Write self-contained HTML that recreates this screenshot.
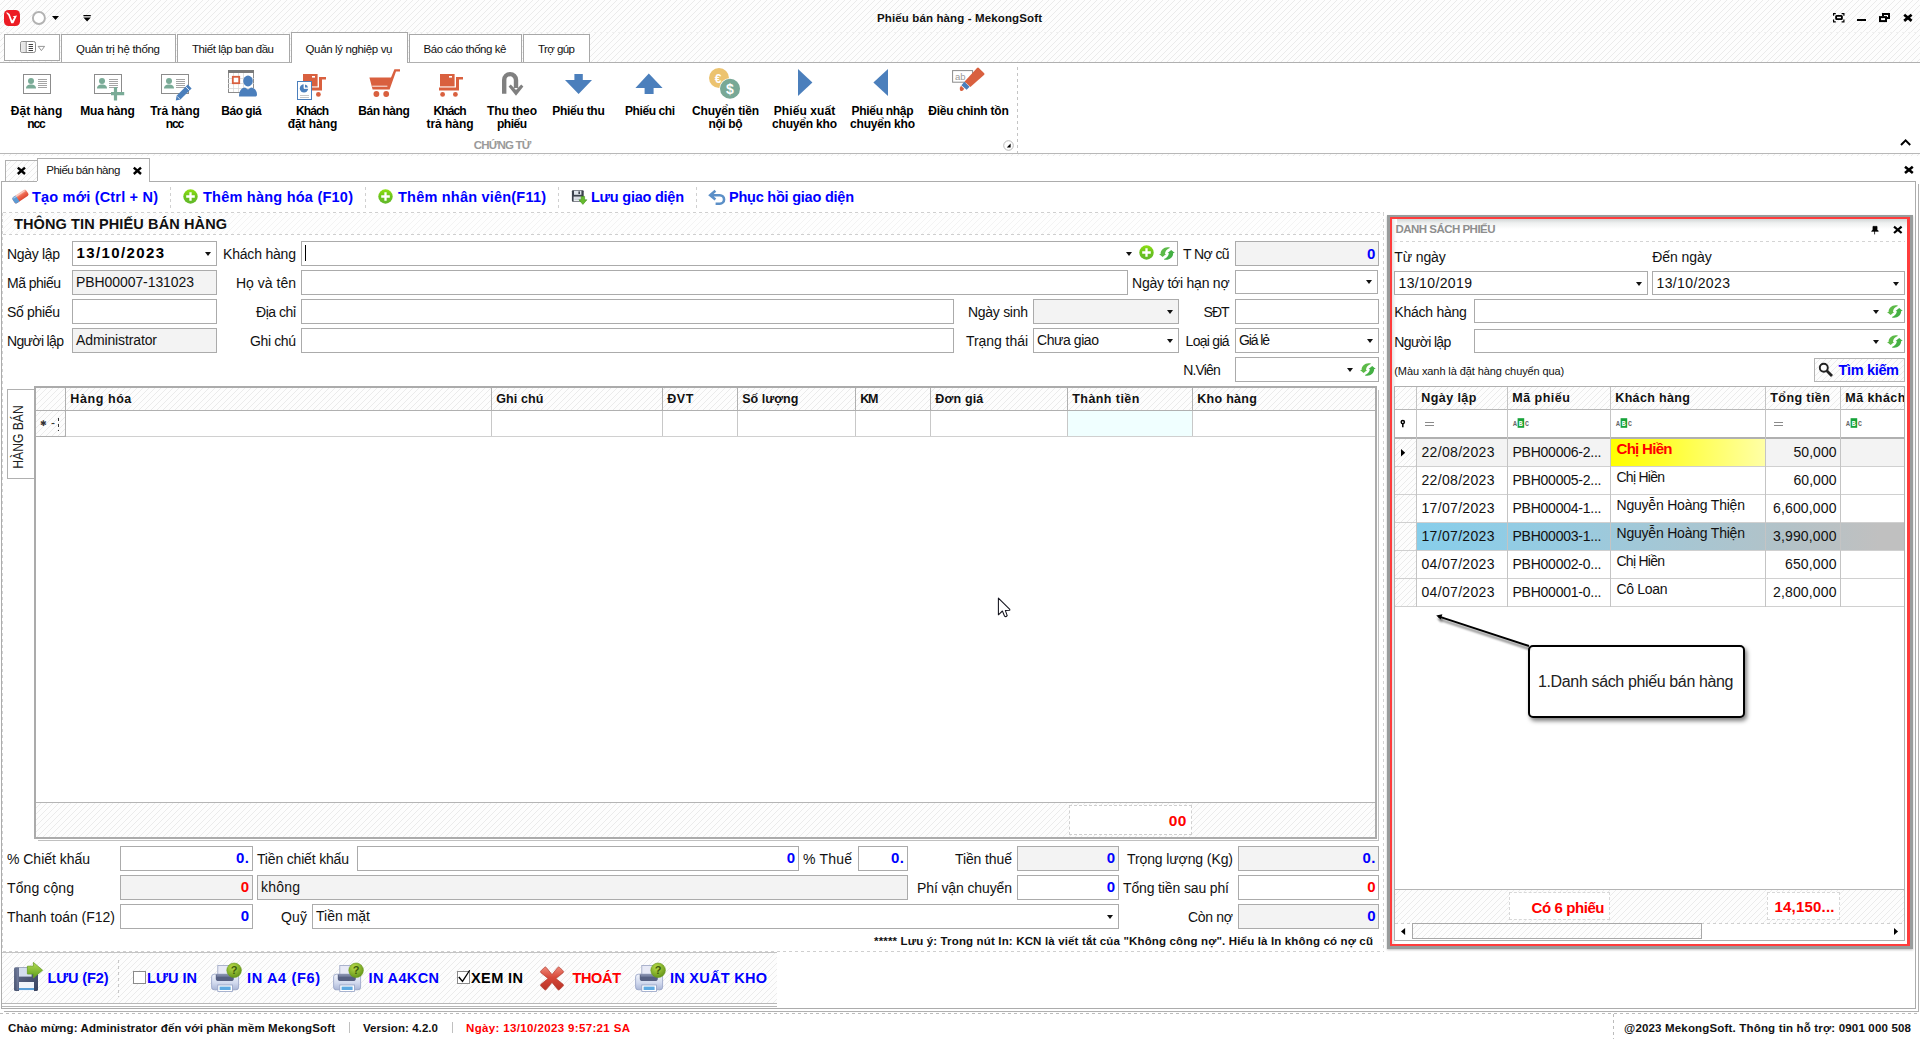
<!DOCTYPE html>
<html><head><meta charset="utf-8"><title>Phiếu bán hàng - MekongSoft</title><style>
html,body{margin:0;padding:0}
body{width:1920px;height:1039px;position:relative;overflow:hidden;background:#fff;font-family:"Liberation Sans",sans-serif;color:#000}
.a{position:absolute;box-sizing:border-box}
.t{white-space:nowrap}
.h{background:repeating-linear-gradient(135deg,#fdfdfd 0,#fdfdfd 3.5px,#ebebeb 3.5px,#ebebeb 4.2426px)}
.h2{background:repeating-linear-gradient(135deg,#fefefe 0,#fefefe 3.5px,#f3f3f3 3.5px,#f3f3f3 4.2426px)}
.in{border:1px solid #ababab;background:#fff}
.ro{border:1px solid #ababab;background:#f3f3f3}
.ar{width:0;height:0;border-left:3.5px solid transparent;border-right:3.5px solid transparent;border-top:4px solid #111}
svg{position:absolute;overflow:visible}
</style></head><body>
<div class="a h" style="left:0px;top:0px;width:1920px;height:63px;"></div>
<div class="a " style="left:0px;top:32px;width:1920px;height:1px;background:repeating-linear-gradient(90deg,#f0f0f0 0,#f0f0f0 3px,transparent 3px,transparent 6px);"></div>
<svg style="left:4px;top:10px" width="16" height="16" viewBox="0 0 16 16"><rect x="0" y="0" width="16" height="16" rx="4.5" fill="#ec1c24"/><path d="M2 2.4L3.4 2.4L5.6 4L8.2 10.6L10.2 7.2L8.6 6.2L13 5.6L9.4 13.2L7.2 13.2L4.4 5.4Z" fill="#fff"/></svg>
<svg style="left:32px;top:11px" width="14" height="14" viewBox="0 0 14 14"><circle cx="6.9" cy="7" r="6" fill="#fff" stroke="#b2b2b2" stroke-width="1.9"/></svg>
<svg style="left:52px;top:16px" width="8" height="4" viewBox="0 0 8 4"><path d="M0 0H7L3.5 4Z" fill="#000"/></svg>
<svg style="left:83px;top:14px" width="9" height="8" viewBox="0 0 9 8"><path d="M0.4 1H7.8V2.3H0.4Z M0.4 3.5H7.8L4.1 7.4Z" fill="#000"/></svg>
<span class="a t" style="left:877.00px;top:10.55px;font-size:11.5px;line-height:15.5px;color:#111;font-weight:bold;letter-spacing:0.129px;">Phiếu bán hàng - MekongSoft</span>
<svg style="left:1832.7px;top:12.8px" width="12" height="10" viewBox="0 0 12 10"><g fill="none" stroke="#000"><path d="M0.6 2.8V0.6H2.8 M8.6 0.6H10.9V2.8 M10.9 6.6V8.8H8.6 M2.8 8.8H0.6V6.6" stroke-width="1.2"/><rect x="3.1" y="2.9" width="5.8" height="3.2" rx="0.6" stroke-width="1.9"/></g></svg>
<div class="a " style="left:1857px;top:19px;width:9px;height:2px;background:#000;"></div>
<svg style="left:1879px;top:13px" width="12" height="10" viewBox="0 0 12 10"><g fill="none" stroke="#000" stroke-width="2"><path d="M4 3.2V1H10V4.9H8"/><rect x="1" y="4.1" width="6" height="4"/></g></svg>
<svg style="left:1902.6px;top:13.6px" width="10" height="8" viewBox="0 0 10 8"><path d="M1.2 0.7L8.6 6.9 M8.6 0.7L1.2 6.9" stroke="#000" stroke-width="2.7" fill="none"/></svg>
<div class="a " style="left:0px;top:62px;width:1920px;height:1px;background:#b0b0b0;"></div>
<div class="a " style="left:4px;top:34px;width:56px;height:27px;background:#fff;border:1px solid #a8a8a8;"></div>
<svg style="left:20px;top:41px" width="26" height="12" viewBox="0 0 26 12"><rect x="0.5" y="0.5" width="15" height="11" rx="1.8" fill="#fff" stroke="#8a8a8a" stroke-width="1"/><rect x="1.2" y="1.2" width="4.4" height="9.6" fill="#e6e6e6"/><path d="M6.2 0.5V11.5" stroke="#8a8a8a"/><path d="M8.6 3.5H13 M8.6 5.5H13 M8.6 7.5H13 M8.6 9.5H13" stroke="#444" stroke-width="1"/><path d="M18.2 5.4H24.6L21.4 9.6Z" fill="#fff" stroke="#8a8a8a" stroke-width="0.9"/></svg>
<div class="a " style="left:61px;top:34px;width:115px;height:29px;background:#fff;border:1px solid #a8a8a8;border-bottom:none;"></div>
<div class="a " style="left:61px;top:62px;width:115px;height:1px;background:#b0b0b0;"></div>
<span class="a t" style="left:76.00px;top:41.55px;font-size:11.5px;line-height:15.5px;color:#111;letter-spacing:-0.305px;">Quản trị hệ thống</span>
<div class="a " style="left:177px;top:34px;width:113px;height:29px;background:#fff;border:1px solid #a8a8a8;border-bottom:none;"></div>
<div class="a " style="left:177px;top:62px;width:113px;height:1px;background:#b0b0b0;"></div>
<span class="a t" style="left:192.00px;top:41.55px;font-size:11.5px;line-height:15.5px;color:#111;letter-spacing:-0.430px;">Thiết lập ban đầu</span>
<div class="a " style="left:409px;top:34px;width:113px;height:29px;background:#fff;border:1px solid #a8a8a8;border-bottom:none;"></div>
<div class="a " style="left:409px;top:62px;width:113px;height:1px;background:#b0b0b0;"></div>
<span class="a t" style="left:423.50px;top:41.55px;font-size:11.5px;line-height:15.5px;color:#111;letter-spacing:-0.435px;">Báo cáo thống kê</span>
<div class="a " style="left:523px;top:34px;width:67px;height:29px;background:#fff;border:1px solid #a8a8a8;border-bottom:none;"></div>
<div class="a " style="left:523px;top:62px;width:67px;height:1px;background:#b0b0b0;"></div>
<span class="a t" style="left:538.00px;top:41.55px;font-size:11.5px;line-height:15.5px;color:#111;letter-spacing:-0.559px;">Trợ gúp</span>
<div class="a " style="left:291px;top:32px;width:117px;height:31px;background:#fff;border:1px solid #a8a8a8;border-bottom:none;"></div>
<span class="a t" style="left:305.50px;top:41.55px;font-size:11.5px;line-height:15.5px;color:#111;letter-spacing:-0.357px;">Quản lý nghiệp vụ</span>
<div class="a " style="left:0px;top:63px;width:1920px;height:90px;background:#fff;"></div>
<div class="a " style="left:292px;top:62px;width:115px;height:1px;background:#fff;"></div>
<div class="a " style="left:0px;top:153px;width:1920px;height:1px;background:#b8b8b8;"></div>
<div class="a h" style="left:0px;top:154px;width:1920px;height:2px;"></div>
<div class="a " style="left:1017px;top:67px;width:1px;height:86px;background:repeating-linear-gradient(180deg,#c4c4c4 0,#c4c4c4 3px,transparent 3px,transparent 6px);"></div>
<svg style="left:23px;top:74px" width="28" height="20" viewBox="0 0 28 20"><rect x="0.5" y="0.5" width="27" height="19" fill="#fff" stroke="#8c8c8c"/><circle cx="8" cy="7" r="3" fill="#7aab97"/><path d="M3 14.6C3 11.4 5 10.4 8 10.4C11 10.4 13 11.4 13 14.6Z" fill="#7aab97"/><path d="M15 5.5H24 M15 7.5H24 M15 9.5H24 M15 11.5H24 M15 13.5H24" stroke="#9a9a9a" stroke-width="0.9"/></svg>
<svg style="left:94px;top:74px" width="32" height="28" viewBox="0 0 32 28"><rect x="0.5" y="0.5" width="27" height="19" fill="#fff" stroke="#8c8c8c"/><circle cx="8" cy="7" r="3" fill="#7aab97"/><path d="M3 14.6C3 11.4 5 10.4 8 10.4C11 10.4 13 11.4 13 14.6Z" fill="#7aab97"/><path d="M15 5.5H24 M15 7.5H24 M15 9.5H24 M15 11.5H24 M15 13.5H24" stroke="#9a9a9a" stroke-width="0.9"/><path d="M21.5 13V26.4 M17 19.6H30.2" stroke="#7aab97" stroke-width="3.2"/></svg>
<svg style="left:161px;top:74px" width="32" height="28" viewBox="0 0 32 28"><rect x="0.5" y="0.5" width="27" height="19" fill="#fff" stroke="#8c8c8c"/><circle cx="8" cy="7" r="3" fill="#7aab97"/><path d="M3 14.6C3 11.4 5 10.4 8 10.4C11 10.4 13 11.4 13 14.6Z" fill="#7aab97"/><path d="M15 5.5H24 M15 7.5H24 M15 9.5H24 M15 11.5H24 M15 13.5H24" stroke="#9a9a9a" stroke-width="0.9"/><path d="M26.8 10.6L30.6 14.4L19.4 25.6L14.8 26.6L15.6 21.8Z" fill="#4b7fbc"/><path d="M24.8 12.8L28.6 16.6" stroke="#fff" stroke-width="0.8"/><path d="M16.2 22.4L18.8 25" stroke="#fff" stroke-width="0.7"/></svg>
<svg style="left:228px;top:70px" width="30" height="28" viewBox="0 0 30 28"><rect x="0.5" y="1.5" width="25" height="21" fill="#fff" stroke="#8c8c8c"/><rect x="0" y="0" width="26" height="3" fill="#7a7a7a"/><path d="M5.5 3V22 M10.5 3V22 M15.5 3V22 M0 8.5H26 M0 13.5H26 M0 18.5H26" stroke="#d8d8d8" stroke-width="0.8"/><rect x="4.8" y="6.8" width="6.4" height="6.4" fill="#fff" stroke="#d9603f" stroke-width="1.8"/><ellipse cx="20" cy="11" rx="4.8" ry="5.4" fill="#4b7fbc"/><path d="M11 26.6C11 20 14 17.6 17 17.4L20 19.6L23 17.4C26 17.6 29 20 29 24.6C29 26 28.4 26.6 27 26.6Z" fill="#4b7fbc"/></svg>
<svg style="left:302px;top:74px" width="26" height="24" viewBox="0 0 26 24"><rect x="1" y="0" width="14.6" height="12.4" fill="#d9603f"/><rect x="10" y="2" width="3" height="1.6" fill="#fff"/><path d="M15.6 3H24V5.6H20V16.4H0V13.4H17V3Z" fill="#d9603f"/><circle cx="3.6" cy="20.4" r="2.4" fill="#d9603f"/><circle cx="16.4" cy="20.4" r="2.4" fill="#d9603f"/></svg>
<svg style="left:297px;top:81px" width="15" height="19" viewBox="0 0 15 19"><rect x="0.5" y="0.5" width="14" height="18" fill="#fff" stroke="#4b7fbc"/><circle cx="7" cy="7.4" r="4.2" fill="#4b7fbc"/><path d="M7 7.4V2.6A4.8 4.8 0 0 1 11.8 7.4Z" fill="#fff" stroke="#fff" stroke-width="0.8"/><path d="M8 6.4V3.4A3.4 3.4 0 0 1 11 6.4Z" fill="#4b7fbc"/><path d="M3 14.5H12 M3 16.5H12" stroke="#b8b8b8" stroke-width="0.8"/></svg>
<svg style="left:369px;top:68px" width="32" height="30" viewBox="0 0 32 30"><path d="M0.4 9.4H22L25.4 1.2H31V3.4H27L20.6 21.6H3.6Z" fill="#d9603f"/><path d="M3.2 18.2H18.4" stroke="#fff" stroke-width="0.9"/><circle cx="7.4" cy="26" r="2.9" fill="#d9603f"/><circle cx="17.2" cy="26" r="2.9" fill="#d9603f"/></svg>
<svg style="left:439px;top:74px" width="26" height="24" viewBox="0 0 26 24"><rect x="1" y="0" width="14.6" height="12.4" fill="#d9603f"/><rect x="10" y="2" width="3" height="1.6" fill="#fff"/><path d="M15.6 3H24V5.6H20V16.4H0V13.4H17V3Z" fill="#d9603f"/><circle cx="3.6" cy="20.4" r="2.4" fill="#d9603f"/><circle cx="16.4" cy="20.4" r="2.4" fill="#d9603f"/></svg>
<svg style="left:501px;top:71px" width="24" height="26" viewBox="0 0 24 26"><path d="M3.2 22.8V9A5.9 5.9 0 0 1 15 9V17" fill="none" stroke="#808080" stroke-width="4.4"/><path d="M7.6 15.6L9.8 13.6L15 19L20.2 13.6L22.4 15.6L15 24.8Z" fill="#808080"/></svg>
<svg style="left:565px;top:74px" width="28" height="21" viewBox="0 0 28 21"><path d="M9.4 0H17.8V6H27L13.6 20L0 6H9.4Z" fill="#4b7fbc"/></svg>
<svg style="left:635px;top:73px" width="28" height="22" viewBox="0 0 28 22"><path d="M13.8 0.4L27.6 15H18.6V21H9.6V15H0.4Z" fill="#4b7fbc"/></svg>
<svg style="left:708px;top:67px" width="34" height="34" viewBox="0 0 34 34"><circle cx="11" cy="11" r="10" fill="#ecc36f"/><text x="10" y="15.6" font-size="12" font-weight="bold" fill="#fff" text-anchor="middle" font-family="Liberation Sans">€</text><circle cx="22" cy="21.8" r="10.6" fill="#fff"/><circle cx="22" cy="21.8" r="10" fill="#78a896"/><text x="22" y="26.8" font-size="14" font-weight="bold" fill="#fff" text-anchor="middle" font-family="Liberation Sans">$</text></svg>
<svg style="left:798px;top:69px" width="15" height="27" viewBox="0 0 15 27"><path d="M0 0L14.4 13.4L0 27Z" fill="#4b7fbc"/></svg>
<svg style="left:873px;top:69px" width="15" height="27" viewBox="0 0 15 27"><path d="M15 0L0.4 13.4L15 27Z" fill="#4b7fbc"/></svg>
<svg style="left:952px;top:67px" width="34" height="26" viewBox="0 0 34 26"><rect x="0.6" y="3.6" width="20" height="11.6" fill="#fff" stroke="#8a8a8a" stroke-width="1"/><text x="3" y="13" font-size="9.5" fill="#9a9a9a" font-family="Liberation Sans">ab</text><path d="M26.6 0.8L32.2 6.2Q32.8 7 32.2 7.8L18.4 20L12.6 14.4L25 1Q25.8 0.2 26.6 0.8Z" fill="#d9603f"/><path d="M12.4 14.8L17.6 19.8L14.6 22.8L9.4 18.2Z" fill="#4b7fbc"/><path d="M9 18.8L12.2 21.8L11 23.6Q9.4 24.4 8.2 23.4Q7.4 22 8 20.6Z" fill="#d9603f"/></svg>
<span class="a t" style="left:10.75px;top:103.40px;font-size:12px;line-height:16px;color:#000;font-weight:bold;letter-spacing:0.024px;">Đặt hàng</span>
<span class="a t" style="left:27.25px;top:116.40px;font-size:12px;line-height:16px;color:#000;font-weight:bold;letter-spacing:-1.089px;">ncc</span>
<span class="a t" style="left:80.25px;top:103.40px;font-size:12px;line-height:16px;color:#000;font-weight:bold;letter-spacing:-0.214px;">Mua hàng</span>
<span class="a t" style="left:150.25px;top:103.40px;font-size:12px;line-height:16px;color:#000;font-weight:bold;letter-spacing:-0.073px;">Trả hàng</span>
<span class="a t" style="left:165.75px;top:116.40px;font-size:12px;line-height:16px;color:#000;font-weight:bold;letter-spacing:-1.089px;">ncc</span>
<span class="a t" style="left:221.25px;top:103.40px;font-size:12px;line-height:16px;color:#000;font-weight:bold;letter-spacing:-0.474px;">Báo giá</span>
<span class="a t" style="left:296.00px;top:103.40px;font-size:12px;line-height:16px;color:#000;font-weight:bold;letter-spacing:-0.918px;">Khách</span>
<span class="a t" style="left:287.75px;top:116.40px;font-size:12px;line-height:16px;color:#000;font-weight:bold;letter-spacing:-0.071px;">đặt hàng</span>
<span class="a t" style="left:358.25px;top:103.40px;font-size:12px;line-height:16px;color:#000;font-weight:bold;letter-spacing:-0.453px;">Bán hàng</span>
<span class="a t" style="left:433.50px;top:103.40px;font-size:12px;line-height:16px;color:#000;font-weight:bold;letter-spacing:-0.918px;">Khách</span>
<span class="a t" style="left:426.50px;top:116.40px;font-size:12px;line-height:16px;color:#000;font-weight:bold;letter-spacing:-0.048px;">trả hàng</span>
<span class="a t" style="left:487.00px;top:103.40px;font-size:12px;line-height:16px;color:#000;font-weight:bold;letter-spacing:-0.093px;">Thu theo</span>
<span class="a t" style="left:497.00px;top:116.40px;font-size:12px;line-height:16px;color:#000;font-weight:bold;letter-spacing:-0.500px;">phiếu</span>
<span class="a t" style="left:552.25px;top:103.40px;font-size:12px;line-height:16px;color:#000;font-weight:bold;letter-spacing:-0.270px;">Phiếu thu</span>
<span class="a t" style="left:625.00px;top:103.40px;font-size:12px;line-height:16px;color:#000;font-weight:bold;letter-spacing:-0.418px;">Phiếu chi</span>
<span class="a t" style="left:692.00px;top:103.40px;font-size:12px;line-height:16px;color:#000;font-weight:bold;letter-spacing:-0.167px;">Chuyển tiền</span>
<span class="a t" style="left:708.50px;top:116.40px;font-size:12px;line-height:16px;color:#000;font-weight:bold;letter-spacing:-0.398px;">nội bộ</span>
<span class="a t" style="left:773.75px;top:103.40px;font-size:12px;line-height:16px;color:#000;font-weight:bold;letter-spacing:0.091px;">Phiếu xuất</span>
<span class="a t" style="left:772.00px;top:116.40px;font-size:12px;line-height:16px;color:#000;font-weight:bold;letter-spacing:-0.187px;">chuyển kho</span>
<span class="a t" style="left:851.50px;top:103.40px;font-size:12px;line-height:16px;color:#000;font-weight:bold;letter-spacing:-0.297px;">Phiếu nhập</span>
<span class="a t" style="left:850.00px;top:116.40px;font-size:12px;line-height:16px;color:#000;font-weight:bold;letter-spacing:-0.187px;">chuyển kho</span>
<span class="a t" style="left:928.25px;top:103.40px;font-size:12px;line-height:16px;color:#000;font-weight:bold;letter-spacing:-0.217px;">Điều chỉnh tồn</span>
<span class="a t" style="left:473.75px;top:138.25px;font-size:11.5px;line-height:15.5px;color:#9a9a9a;font-weight:bold;letter-spacing:-0.809px;">CHỨNG TỪ</span>
<svg style="left:1003px;top:140px" width="11" height="11" viewBox="0 0 11 11"><circle cx="5.5" cy="5.5" r="4.8" fill="#fff" stroke="#b0b0b0" stroke-width="0.9"/><path d="M7.6 3.6V7.4H3.8Z" fill="#000"/></svg>
<svg style="left:1900px;top:139px" width="12" height="7" viewBox="0 0 12 7"><path d="M1 6L5.6 1.4L10.2 6" fill="none" stroke="#000" stroke-width="2"/></svg>
<div class="a h" style="left:5px;top:160px;width:33px;height:22px;border:1px solid #b0b0b0;border-bottom:none;"></div>
<svg style="left:17.4px;top:166.8px" width="9" height="8" viewBox="0 0 9 8"><path d="M0.8 0.6L8 7 M8 0.6L0.8 7" stroke="#000" stroke-width="2.4" fill="none"/></svg>
<div class="a " style="left:37px;top:158px;width:113px;height:24px;background:#fff;border:1px solid #b0b0b0;border-bottom:none;"></div>
<span class="a t" style="left:46.30px;top:163.05px;font-size:11.5px;line-height:15.5px;color:#111;letter-spacing:-0.506px;">Phiếu bán hàng</span>
<svg style="left:133px;top:166.8px" width="9" height="8" viewBox="0 0 9 8"><path d="M0.8 0.6L8 7 M8 0.6L0.8 7" stroke="#000" stroke-width="2.4" fill="none"/></svg>
<svg style="left:1904.4px;top:166px" width="10" height="8" viewBox="0 0 10 8"><path d="M1 0.7L8.8 6.9 M8.8 0.7L1 6.9" stroke="#000" stroke-width="2.6" fill="none"/></svg>
<div class="a " style="left:1px;top:181px;width:1915px;height:828px;border:1px solid #acacac;"></div>
<div class="a " style="left:37px;top:181px;width:112px;height:1px;background:#fff;"></div>
<div class="a " style="left:2px;top:1006px;width:775px;height:1px;background:#b8b8b8;"></div>
<div class="a " style="left:1918px;top:184px;width:1px;height:828px;background:#b0b0b0;"></div>
<div class="a " style="left:4px;top:1011px;width:1915px;height:1px;background:#b0b0b0;"></div>
<span class="a t" style="left:32.00px;top:187.55px;font-size:14.5px;line-height:18.5px;color:#0000ff;font-weight:bold;letter-spacing:0.195px;">Tạo mới (Ctrl + N)</span>
<span class="a t" style="left:203.00px;top:187.55px;font-size:14.5px;line-height:18.5px;color:#0000ff;font-weight:bold;letter-spacing:0.232px;">Thêm hàng hóa (F10)</span>
<span class="a t" style="left:398.00px;top:187.55px;font-size:14.5px;line-height:18.5px;color:#0000ff;font-weight:bold;letter-spacing:0.210px;">Thêm nhân viên(F11)</span>
<span class="a t" style="left:591.00px;top:187.55px;font-size:14.5px;line-height:18.5px;color:#0000ff;font-weight:bold;letter-spacing:-0.241px;">Lưu giao diện</span>
<span class="a t" style="left:729.00px;top:187.55px;font-size:14.5px;line-height:18.5px;color:#0000ff;font-weight:bold;letter-spacing:-0.229px;">Phục hồi giao diện</span>
<div class="a " style="left:170px;top:187px;width:1px;height:21px;background:repeating-linear-gradient(180deg,#d0d0d0 0,#d0d0d0 3px,transparent 3px,transparent 6px);"></div>
<div class="a " style="left:365px;top:187px;width:1px;height:21px;background:repeating-linear-gradient(180deg,#d0d0d0 0,#d0d0d0 3px,transparent 3px,transparent 6px);"></div>
<div class="a " style="left:558px;top:187px;width:1px;height:21px;background:repeating-linear-gradient(180deg,#d0d0d0 0,#d0d0d0 3px,transparent 3px,transparent 6px);"></div>
<div class="a " style="left:696px;top:187px;width:1px;height:21px;background:repeating-linear-gradient(180deg,#d0d0d0 0,#d0d0d0 3px,transparent 3px,transparent 6px);"></div>
<svg style="left:11px;top:188px" width="19" height="17" viewBox="0 0 19 17"><defs><linearGradient id="er" x1="0" y1="0" x2="0" y2="1"><stop offset="0" stop-color="#fbc4b6"/><stop offset="0.45" stop-color="#ee6a52"/><stop offset="1" stop-color="#dc4630"/></linearGradient></defs><g transform="translate(9.4 8.5) rotate(-34)"><rect x="-8.2" y="-3.6" width="16.4" height="7.2" rx="1.9" fill="url(#er)"/><path d="M-8.2 -1.7Q-8.2 -3.6 -6.3 -3.6H-3.4V3.6H-6.3Q-8.2 3.6 -8.2 1.7Z" fill="#5b9bd5"/><path d="M-6.8 -2.4H6.8" stroke="#fff" stroke-width="1.1" opacity="0.45"/></g></svg>
<svg style="left:183.1px;top:189.3px" width="15" height="15" viewBox="0 0 15 15"><defs><linearGradient id="pg" x1="0" y1="0" x2="0" y2="1"><stop offset="0" stop-color="#8fe014"/><stop offset="0.5" stop-color="#6cc41c"/><stop offset="1" stop-color="#62b82c"/></linearGradient></defs><circle cx="7.5" cy="7.5" r="7.2" fill="url(#pg)"/><path d="M7.5 3.2V11.8 M3.2 7.5H11.8" stroke="#fff" stroke-width="2.3"/></svg>
<svg style="left:378.1px;top:189.3px" width="15" height="15" viewBox="0 0 15 15"><defs><linearGradient id="pg" x1="0" y1="0" x2="0" y2="1"><stop offset="0" stop-color="#8fe014"/><stop offset="0.5" stop-color="#6cc41c"/><stop offset="1" stop-color="#62b82c"/></linearGradient></defs><circle cx="7.5" cy="7.5" r="7.2" fill="url(#pg)"/><path d="M7.5 3.2V11.8 M3.2 7.5H11.8" stroke="#fff" stroke-width="2.3"/></svg>
<svg style="left:571px;top:190px" width="17" height="15" viewBox="0 0 17 15"><rect x="0.9" y="0.2" width="11.8" height="11.6" rx="1" fill="#3c424c"/><rect x="3" y="0.8" width="7.4" height="4" fill="#dfe4ea"/><rect x="7.4" y="1.4" width="1.6" height="2.6" fill="#3c424c"/><rect x="2.6" y="6.6" width="8.4" height="4.6" fill="#eef0f4"/><path d="M3.4 8H10 M3.4 9.6H10" stroke="#a8b0bc" stroke-width="0.6"/><path d="M10.2 6.4H13.6V9.8H15.9L11.9 14.4L7.9 9.8H10.2Z" fill="#66bb2e" stroke="#3f8f1a" stroke-width="0.6"/></svg>
<svg style="left:709px;top:190px" width="17" height="15" viewBox="0 0 17 15"><path d="M6.4 0.8L1.2 5.2L6.4 9.6 M1.6 5.2H10.8A4.25 4.25 0 0 1 10.8 13.7H6.6" fill="none" stroke="#5b8fc7" stroke-width="2.6"/></svg>
<div class="a " style="left:3px;top:212px;width:1381px;height:1px;background:repeating-linear-gradient(90deg,#cfcfcf 0,#cfcfcf 3px,transparent 3px,transparent 6px);"></div>
<div class="a " style="left:0px;top:1013px;width:1920px;height:1px;background:repeating-linear-gradient(90deg,#bcbcbc 0,#bcbcbc 3px,transparent 3px,transparent 6px);"></div>
<span class="a t" style="left:8.00px;top:1020.85px;font-size:11.5px;line-height:15.5px;color:#111;font-weight:bold;letter-spacing:0.120px;">Chào mừng: Administrator đến với phần mềm MekongSoft</span>
<span class="a t" style="left:363.00px;top:1020.85px;font-size:11.5px;line-height:15.5px;color:#111;font-weight:bold;letter-spacing:0.065px;">Version: 4.2.0</span>
<span class="a t" style="left:466.00px;top:1020.85px;font-size:11.5px;line-height:15.5px;color:#ff0000;font-weight:bold;letter-spacing:0.357px;">Ngày: 13/10/2023 9:57:21 SA</span>
<div class="a " style="left:349px;top:1022px;width:1px;height:11px;background:#c0c0c0;"></div>
<div class="a " style="left:452px;top:1022px;width:1px;height:11px;background:#c0c0c0;"></div>
<div class="a " style="left:1613px;top:1014px;width:1px;height:26px;background:repeating-linear-gradient(180deg,#bbb 0,#bbb 3px,transparent 3px,transparent 6px);"></div>
<span class="a t" style="left:1624.00px;top:1020.85px;font-size:11.5px;line-height:15.5px;color:#111;font-weight:bold;letter-spacing:0.173px;">@2023 MekongSoft. Thông tin hỗ trợ: 0901 000 508</span>
<div class="a h2" style="left:2px;top:213px;width:1381px;height:21px;"></div>
<span class="a t" style="left:14.00px;top:214.75px;font-size:14.5px;line-height:18.5px;color:#111;font-weight:bold;letter-spacing:0.120px;">THÔNG TIN PHIẾU BÁN HÀNG</span>
<div class="a " style="left:3px;top:234px;width:1381px;height:1px;background:repeating-linear-gradient(90deg,#cfcfcf 0,#cfcfcf 3px,transparent 3px,transparent 6px);"></div>
<div class="a " style="left:1383px;top:213px;width:1px;height:738px;background:repeating-linear-gradient(180deg,#d4d4d4 0,#d4d4d4 3px,transparent 3px,transparent 6px);"></div>
<div class="a " style="left:2px;top:213px;width:1px;height:738px;background:repeating-linear-gradient(180deg,#d4d4d4 0,#d4d4d4 3px,transparent 3px,transparent 6px);"></div>
<span class="a t" style="left:7.00px;top:244.80px;font-size:14px;line-height:18px;color:#111;letter-spacing:-0.323px;">Ngày lập</span>
<div class="a in" style="left:72px;top:241px;width:145px;height:25px;"></div>
<span class="a t" style="left:76.50px;top:242.60px;font-size:15px;line-height:19px;color:#000;font-weight:bold;letter-spacing:1.381px;">13/10/2023</span>
<div class="a ar" style="left:204.5px;top:252px;width:0px;height:0px;"></div>
<span class="a t" style="left:7.00px;top:273.80px;font-size:14px;line-height:18px;color:#111;letter-spacing:-0.514px;">Mã phiếu</span>
<div class="a ro" style="left:72px;top:270px;width:145px;height:25px;"></div>
<span class="a t" style="left:76.00px;top:273.10px;font-size:14px;line-height:18px;color:#111;letter-spacing:-0.079px;">PBH00007-131023</span>
<span class="a t" style="left:7.00px;top:302.80px;font-size:14px;line-height:18px;color:#111;letter-spacing:-0.325px;">Số phiếu</span>
<div class="a in" style="left:72px;top:299px;width:145px;height:25px;"></div>
<span class="a t" style="left:7.00px;top:331.80px;font-size:14px;line-height:18px;color:#111;letter-spacing:-0.643px;">Người lập</span>
<div class="a ro" style="left:72px;top:328px;width:145px;height:25px;"></div>
<span class="a t" style="left:76.00px;top:331.10px;font-size:14px;line-height:18px;color:#111;letter-spacing:-0.123px;">Administrator</span>
<span class="a t" style="left:223.00px;top:244.80px;font-size:14px;line-height:18px;color:#111;letter-spacing:-0.193px;">Khách hàng</span>
<div class="a in" style="left:301px;top:241px;width:877px;height:25px;"></div>
<div class="a " style="left:305px;top:245px;width:1px;height:16px;background:#000;"></div>
<div class="a ar" style="left:1125.5px;top:252px;width:0px;height:0px;"></div>
<svg style="left:1139.4px;top:245px" width="15" height="15" viewBox="0 0 15 15"><defs><linearGradient id="pg" x1="0" y1="0" x2="0" y2="1"><stop offset="0" stop-color="#8fe014"/><stop offset="0.5" stop-color="#6cc41c"/><stop offset="1" stop-color="#62b82c"/></linearGradient></defs><circle cx="7.5" cy="7.5" r="7.2" fill="url(#pg)"/><path d="M7.5 3.2V11.8 M3.2 7.5H11.8" stroke="#fff" stroke-width="2.3"/></svg>
<svg style="left:1159px;top:246.5px" width="16" height="13" viewBox="0 0 16 13"><path d="M10.8 0.5C5.5 -0.7 1.6 2.6 1.6 6.9L0 6.9L3.6 10L7.2 6.9L6 6.9C6 4.2 8 2 10.8 1Z" fill="#5cba48"/><path d="M10.8 0.5C5.5 -0.7 1.6 2.6 1.6 6.9L0 6.9L3.6 10L7.2 6.9L6 6.9C6 4.2 8 2 10.8 1Z" fill="#44b044" transform="rotate(180 7.9 6.5)"/></svg>
<span class="a t" style="left:236.00px;top:273.80px;font-size:14px;line-height:18px;color:#111;letter-spacing:0.009px;">Họ và tên</span>
<div class="a in" style="left:301px;top:270px;width:827px;height:25px;"></div>
<span class="a t" style="left:256.00px;top:302.80px;font-size:14px;line-height:18px;color:#111;letter-spacing:-0.466px;">Địa chỉ</span>
<div class="a in" style="left:301px;top:299px;width:653px;height:25px;"></div>
<span class="a t" style="left:250.00px;top:331.80px;font-size:14px;line-height:18px;color:#111;letter-spacing:-0.376px;">Ghi chú</span>
<div class="a in" style="left:301px;top:328px;width:653px;height:25px;"></div>
<span class="a t" style="left:1183.00px;top:244.80px;font-size:14px;line-height:18px;color:#111;letter-spacing:-0.594px;">T Nợ cũ</span>
<div class="a ro" style="left:1235px;top:241px;width:144px;height:25px;"></div>
<span class="a t" style="left:1366.96px;top:243.70px;font-size:15px;line-height:19px;color:#0000ff;font-weight:bold;">0</span>
<span class="a t" style="left:1132.00px;top:273.80px;font-size:14px;line-height:18px;color:#111;letter-spacing:-0.234px;">Ngày tới hạn nợ</span>
<div class="a in" style="left:1235px;top:270px;width:143px;height:24px;"></div>
<div class="a ar" style="left:1366px;top:280px;width:0px;height:0px;"></div>
<span class="a t" style="left:968.00px;top:302.80px;font-size:14px;line-height:18px;color:#111;letter-spacing:-0.283px;">Ngày sinh</span>
<div class="a ro" style="left:1033px;top:299px;width:146px;height:25px;"></div>
<div class="a ar" style="left:1166.5px;top:310px;width:0px;height:0px;"></div>
<span class="a t" style="left:1203.60px;top:302.80px;font-size:14px;line-height:18px;color:#111;letter-spacing:-1.001px;">SĐT</span>
<div class="a in" style="left:1235px;top:299px;width:144px;height:25px;"></div>
<span class="a t" style="left:966.00px;top:331.80px;font-size:14px;line-height:18px;color:#111;letter-spacing:-0.058px;">Trạng thái</span>
<div class="a in" style="left:1033px;top:328px;width:146px;height:25px;"></div>
<span class="a t" style="left:1037.00px;top:331.10px;font-size:14px;line-height:18px;color:#111;letter-spacing:-0.428px;">Chưa giao</span>
<div class="a ar" style="left:1166.5px;top:339px;width:0px;height:0px;"></div>
<span class="a t" style="left:1185.60px;top:331.80px;font-size:14px;line-height:18px;color:#111;letter-spacing:-0.721px;">Loại giá</span>
<div class="a in" style="left:1235px;top:328px;width:144px;height:25px;"></div>
<span class="a t" style="left:1239.00px;top:331.10px;font-size:14px;line-height:18px;color:#111;letter-spacing:-1.116px;">Giá lẻ</span>
<div class="a ar" style="left:1367px;top:339px;width:0px;height:0px;"></div>
<span class="a t" style="left:1183.30px;top:360.80px;font-size:14px;line-height:18px;color:#111;letter-spacing:-0.875px;">N.Viên</span>
<div class="a in" style="left:1235px;top:357px;width:144px;height:25px;"></div>
<div class="a ar" style="left:1347px;top:368px;width:0px;height:0px;"></div>
<svg style="left:1360.3px;top:362.7px" width="16" height="13" viewBox="0 0 16 13"><path d="M10.8 0.5C5.5 -0.7 1.6 2.6 1.6 6.9L0 6.9L3.6 10L7.2 6.9L6 6.9C6 4.2 8 2 10.8 1Z" fill="#5cba48"/><path d="M10.8 0.5C5.5 -0.7 1.6 2.6 1.6 6.9L0 6.9L3.6 10L7.2 6.9L6 6.9C6 4.2 8 2 10.8 1Z" fill="#44b044" transform="rotate(180 7.9 6.5)"/></svg>
<div class="a " style="left:7px;top:389px;width:28px;height:90px;background:#fff;border:1px solid #b0b0b0;border-right:none;"></div>
<span class="a t" style="left:18.4px;top:437.3px;transform:translate(-50%,-50%) rotate(-90deg) scaleX(0.868);font-size:14px;line-height:16px;color:#222">HÀNG BÁN</span>
<div class="a " style="left:34px;top:386px;width:1343px;height:453px;background:#fff;border:2px solid #ababab;"></div>
<div class="a " style="left:1378px;top:390px;width:1px;height:451px;background:#c0c0c0;"></div>
<div class="a " style="left:38px;top:840px;width:1341px;height:1px;background:#c0c0c0;"></div>
<div class="a h" style="left:36px;top:388px;width:1339px;height:22px;"></div>
<div class="a " style="left:36px;top:410px;width:1339px;height:1px;background:#b0b0b0;"></div>
<div class="a " style="left:65px;top:388px;width:1px;height:22px;background:#b0b0b0;"></div>
<div class="a " style="left:65px;top:411px;width:1px;height:25px;background:#b0b0b0;"></div>
<span class="a t" style="left:70.30px;top:390.55px;font-size:12.5px;line-height:16.5px;color:#111;font-weight:bold;letter-spacing:0.580px;">Hàng hóa</span>
<div class="a " style="left:491px;top:388px;width:1px;height:22px;background:#b0b0b0;"></div>
<div class="a " style="left:491px;top:411px;width:1px;height:25px;background:#c8c8c8;"></div>
<span class="a t" style="left:496.30px;top:390.55px;font-size:12.5px;line-height:16.5px;color:#111;font-weight:bold;letter-spacing:0.079px;">Ghi chú</span>
<div class="a " style="left:662px;top:388px;width:1px;height:22px;background:#b0b0b0;"></div>
<div class="a " style="left:662px;top:411px;width:1px;height:25px;background:#c8c8c8;"></div>
<span class="a t" style="left:667.30px;top:390.55px;font-size:12.5px;line-height:16.5px;color:#111;font-weight:bold;letter-spacing:0.500px;">ĐVT</span>
<div class="a " style="left:737px;top:388px;width:1px;height:22px;background:#b0b0b0;"></div>
<div class="a " style="left:737px;top:411px;width:1px;height:25px;background:#c8c8c8;"></div>
<span class="a t" style="left:742.30px;top:390.55px;font-size:12.5px;line-height:16.5px;color:#111;font-weight:bold;letter-spacing:-0.018px;">Số lượng</span>
<div class="a " style="left:855px;top:388px;width:1px;height:22px;background:#b0b0b0;"></div>
<div class="a " style="left:855px;top:411px;width:1px;height:25px;background:#c8c8c8;"></div>
<span class="a t" style="left:860.30px;top:390.55px;font-size:12.5px;line-height:16.5px;color:#111;font-weight:bold;letter-spacing:-1.439px;">KM</span>
<div class="a " style="left:930px;top:388px;width:1px;height:22px;background:#b0b0b0;"></div>
<div class="a " style="left:930px;top:411px;width:1px;height:25px;background:#c8c8c8;"></div>
<span class="a t" style="left:935.30px;top:390.55px;font-size:12.5px;line-height:16.5px;color:#111;font-weight:bold;letter-spacing:0.153px;">Đơn giá</span>
<div class="a " style="left:1067px;top:388px;width:1px;height:22px;background:#b0b0b0;"></div>
<div class="a " style="left:1067px;top:411px;width:1px;height:25px;background:#c8c8c8;"></div>
<span class="a t" style="left:1072.30px;top:390.55px;font-size:12.5px;line-height:16.5px;color:#111;font-weight:bold;letter-spacing:0.424px;">Thành tiền</span>
<div class="a " style="left:1192px;top:388px;width:1px;height:22px;background:#b0b0b0;"></div>
<div class="a " style="left:1192px;top:411px;width:1px;height:25px;background:#c8c8c8;"></div>
<span class="a t" style="left:1197.30px;top:390.55px;font-size:12.5px;line-height:16.5px;color:#111;font-weight:bold;letter-spacing:0.268px;">Kho hàng</span>
<div class="a h" style="left:36px;top:411px;width:29px;height:25px;"></div>
<div class="a " style="left:36px;top:436px;width:30px;height:1px;background:#b0b0b0;"></div>
<div class="a " style="left:66px;top:436px;width:1309px;height:1px;background:#d0d0d0;"></div>
<div class="a " style="left:1068px;top:411px;width:124px;height:25px;background:#f0ffff;"></div>
<span class="a t" style="left:40.00px;top:417.50px;font-size:8px;line-height:12px;color:#333;">✱</span>
<span class="a t" style="left:51.00px;top:415.00px;font-size:12px;line-height:16px;color:#333;">-</span>
<div class="a " style="left:58px;top:418px;width:1px;height:13px;background:repeating-linear-gradient(180deg,#333 0,#333 3px,transparent 3px,transparent 6px);"></div>
<div class="a " style="left:36px;top:802px;width:1339px;height:1px;background:#b4b4b4;"></div>
<div class="a h" style="left:36px;top:803px;width:1339px;height:34px;"></div>
<div class="a " style="left:1069px;top:805px;width:123px;height:30px;background:#fff;border:1px dashed #cfcfcf;"></div>
<span class="a t" style="left:1168.70px;top:810.75px;font-size:15.5px;line-height:19.5px;color:#ff0000;font-weight:bold;letter-spacing:0.558px;">00</span>
<span class="a t" style="left:7.00px;top:850.00px;font-size:14px;line-height:18px;color:#111;letter-spacing:-0.025px;">% Chiết khấu</span>
<div class="a in" style="left:120px;top:846px;width:133px;height:25px;"></div>
<span class="a t" style="left:236.00px;top:848.00px;font-size:15px;line-height:19px;color:#0000ff;font-weight:bold;letter-spacing:0.490px;">0.</span>
<span class="a t" style="left:257.00px;top:850.00px;font-size:14px;line-height:18px;color:#111;letter-spacing:-0.174px;">Tiền chiết khấu</span>
<div class="a in" style="left:357px;top:846px;width:442px;height:25px;"></div>
<span class="a t" style="left:786.66px;top:848.00px;font-size:15px;line-height:19px;color:#0000ff;font-weight:bold;">0</span>
<span class="a t" style="left:803.00px;top:850.00px;font-size:14px;line-height:18px;color:#111;letter-spacing:0.200px;">% Thuế</span>
<div class="a in" style="left:858px;top:846px;width:50px;height:25px;"></div>
<span class="a t" style="left:891.00px;top:848.00px;font-size:15px;line-height:19px;color:#0000ff;font-weight:bold;letter-spacing:0.490px;">0.</span>
<span class="a t" style="left:955.00px;top:850.00px;font-size:14px;line-height:18px;color:#111;letter-spacing:-0.108px;">Tiền thuế</span>
<div class="a ro" style="left:1017px;top:846px;width:102px;height:25px;"></div>
<span class="a t" style="left:1106.66px;top:848.00px;font-size:15px;line-height:19px;color:#0000ff;font-weight:bold;">0</span>
<span class="a t" style="left:1127.00px;top:850.00px;font-size:14px;line-height:18px;color:#111;letter-spacing:-0.102px;">Trọng lượng (Kg)</span>
<div class="a ro" style="left:1238px;top:846px;width:141px;height:25px;"></div>
<span class="a t" style="left:1362.50px;top:848.00px;font-size:15px;line-height:19px;color:#0000ff;font-weight:bold;letter-spacing:0.490px;">0.</span>
<span class="a t" style="left:7.00px;top:879.00px;font-size:14px;line-height:18px;color:#111;letter-spacing:0.104px;">Tổng cộng</span>
<div class="a ro" style="left:120px;top:875px;width:133px;height:25px;"></div>
<span class="a t" style="left:240.66px;top:877.00px;font-size:15px;line-height:19px;color:#ff0000;font-weight:bold;">0</span>
<div class="a ro" style="left:257px;top:875px;width:651px;height:25px;"></div>
<span class="a t" style="left:261.00px;top:878.10px;font-size:14px;line-height:18px;color:#111;letter-spacing:0.213px;">không</span>
<span class="a t" style="left:917.00px;top:879.00px;font-size:14px;line-height:18px;color:#111;letter-spacing:-0.117px;">Phí vận chuyển</span>
<div class="a in" style="left:1017px;top:875px;width:102px;height:25px;"></div>
<span class="a t" style="left:1106.66px;top:877.00px;font-size:15px;line-height:19px;color:#0000ff;font-weight:bold;">0</span>
<span class="a t" style="left:1123.00px;top:879.00px;font-size:14px;line-height:18px;color:#111;letter-spacing:-0.138px;">Tổng tiền sau phí</span>
<div class="a in" style="left:1238px;top:875px;width:141px;height:25px;"></div>
<span class="a t" style="left:1367.16px;top:877.00px;font-size:15px;line-height:19px;color:#ff0000;font-weight:bold;">0</span>
<span class="a t" style="left:7.00px;top:908.00px;font-size:14px;line-height:18px;color:#111;letter-spacing:-0.012px;">Thanh toán (F12)</span>
<div class="a in" style="left:120px;top:904px;width:133px;height:25px;"></div>
<span class="a t" style="left:240.66px;top:906.00px;font-size:15px;line-height:19px;color:#0000ff;font-weight:bold;">0</span>
<span class="a t" style="left:281.00px;top:908.00px;font-size:14px;line-height:18px;color:#111;letter-spacing:0.161px;">Quỹ</span>
<div class="a in" style="left:312px;top:904px;width:807px;height:25px;"></div>
<span class="a t" style="left:316.00px;top:907.10px;font-size:14px;line-height:18px;color:#111;letter-spacing:0.007px;">Tiền mặt</span>
<div class="a ar" style="left:1106.5px;top:915px;width:0px;height:0px;"></div>
<span class="a t" style="left:1188.00px;top:908.00px;font-size:14px;line-height:18px;color:#111;letter-spacing:-0.309px;">Còn nợ</span>
<div class="a ro" style="left:1238px;top:904px;width:141px;height:25px;"></div>
<span class="a t" style="left:1367.16px;top:906.00px;font-size:15px;line-height:19px;color:#0000ff;font-weight:bold;">0</span>
<span class="a t" style="left:874.00px;top:934.05px;font-size:11.5px;line-height:15.5px;color:#111;font-weight:bold;letter-spacing:0.154px;">***** Lưu ý: Trong nút In: KCN là viết tắt của &quot;Không công nợ&quot;. Hiểu là In không có nợ cũ</span>
<div class="a " style="left:3px;top:951px;width:1381px;height:1px;background:repeating-linear-gradient(90deg,#cfcfcf 0,#cfcfcf 3px,transparent 3px,transparent 6px);"></div>
<div class="a " style="left:1387px;top:215px;width:526px;height:734px;background:#989c9c;box-shadow:0 1px 2px rgba(0,0,0,0.25);"></div>
<div class="a " style="left:1390px;top:217px;width:520px;height:729px;background:#ff3c3c;"></div>
<div class="a " style="left:1392px;top:219px;width:515px;height:725px;background:#fff;"></div>
<div class="a " style="left:1392px;top:219px;width:515px;height:12px;background:linear-gradient(180deg,#d2d6d6 0,#eef0f0 4px,#fff 10px);"></div>
<div class="a " style="left:1392px;top:219px;width:5px;height:725px;background:linear-gradient(90deg,#e4e4e4 0,#fff 4px);"></div>
<span class="a t" style="left:1395.50px;top:222.25px;font-size:11.5px;line-height:15.5px;color:#8e8e8e;font-weight:bold;letter-spacing:-0.524px;">DANH SÁCH PHIẾU</span>
<div class="a " style="left:1394px;top:241px;width:511px;height:1px;background:repeating-linear-gradient(90deg,#d4d4d4 0,#d4d4d4 3px,transparent 3px,transparent 6px);"></div>
<svg style="left:1871px;top:226px" width="8" height="9" viewBox="0 0 8 9"><path d="M2 0.4H6V3.8L7.4 5.2H0.6L2 3.8Z M3.6 5V8.4" fill="#000" stroke="#000" stroke-width="0.8"/></svg>
<svg style="left:1893px;top:226px" width="10" height="8" viewBox="0 0 10 8"><path d="M1 0.6L8.6 7 M8.6 0.6L1 7" stroke="#000" stroke-width="2.2" fill="none"/></svg>
<span class="a t" style="left:1394.30px;top:248.20px;font-size:14px;line-height:18px;color:#111;letter-spacing:-0.113px;">Từ ngày</span>
<span class="a t" style="left:1652.30px;top:248.20px;font-size:14px;line-height:18px;color:#111;letter-spacing:-0.062px;">Đến ngày</span>
<div class="a in" style="left:1394px;top:271px;width:254px;height:24px;"></div>
<span class="a t" style="left:1398.50px;top:273.90px;font-size:14px;line-height:18px;color:#111;letter-spacing:0.380px;">13/10/2019</span>
<div class="a ar" style="left:1635.5px;top:282px;width:0px;height:0px;"></div>
<div class="a in" style="left:1652px;top:271px;width:253px;height:24px;"></div>
<span class="a t" style="left:1656.50px;top:273.90px;font-size:14px;line-height:18px;color:#111;letter-spacing:0.380px;">13/10/2023</span>
<div class="a ar" style="left:1892.5px;top:282px;width:0px;height:0px;"></div>
<span class="a t" style="left:1394.30px;top:302.80px;font-size:14px;line-height:18px;color:#111;letter-spacing:-0.249px;">Khách hàng</span>
<div class="a in" style="left:1474px;top:299px;width:431px;height:24px;"></div>
<div class="a ar" style="left:1872.5px;top:310px;width:0px;height:0px;"></div>
<svg style="left:1886.5px;top:304.5px" width="16" height="13" viewBox="0 0 16 13"><path d="M10.8 0.5C5.5 -0.7 1.6 2.6 1.6 6.9L0 6.9L3.6 10L7.2 6.9L6 6.9C6 4.2 8 2 10.8 1Z" fill="#5cba48"/><path d="M10.8 0.5C5.5 -0.7 1.6 2.6 1.6 6.9L0 6.9L3.6 10L7.2 6.9L6 6.9C6 4.2 8 2 10.8 1Z" fill="#44b044" transform="rotate(180 7.9 6.5)"/></svg>
<span class="a t" style="left:1394.30px;top:333.20px;font-size:14px;line-height:18px;color:#111;letter-spacing:-0.643px;">Người lập</span>
<div class="a in" style="left:1474px;top:329px;width:431px;height:24px;"></div>
<div class="a ar" style="left:1872.5px;top:340px;width:0px;height:0px;"></div>
<svg style="left:1886.5px;top:334.5px" width="16" height="13" viewBox="0 0 16 13"><path d="M10.8 0.5C5.5 -0.7 1.6 2.6 1.6 6.9L0 6.9L3.6 10L7.2 6.9L6 6.9C6 4.2 8 2 10.8 1Z" fill="#5cba48"/><path d="M10.8 0.5C5.5 -0.7 1.6 2.6 1.6 6.9L0 6.9L3.6 10L7.2 6.9L6 6.9C6 4.2 8 2 10.8 1Z" fill="#44b044" transform="rotate(180 7.9 6.5)"/></svg>
<span class="a t" style="left:1394.30px;top:364.00px;font-size:11px;line-height:15px;color:#111;letter-spacing:-0.096px;">(Màu xanh là đặt hàng chuyển qua)</span>
<div class="a h" style="left:1814px;top:358px;width:91px;height:24px;border:1px solid #b4b4b4;"></div>
<svg style="left:1818px;top:362px" width="16" height="16" viewBox="0 0 16 16"><circle cx="5.8" cy="5.8" r="4" fill="#fff" stroke="#222" stroke-width="1.9"/><path d="M8.8 8.8L14 14" stroke="#222" stroke-width="2.8"/></svg>
<span class="a t" style="left:1838.50px;top:361.25px;font-size:14.5px;line-height:18.5px;color:#0000ff;font-weight:bold;letter-spacing:-0.337px;">Tìm kiếm</span>
<div class="a " style="left:1394px;top:386px;width:511px;height:555px;background:#fff;border:1px solid #b0b0b0;"></div>
<div class="a h" style="left:1395px;top:387px;width:509px;height:22px;"></div>
<div class="a " style="left:1395px;top:409px;width:509px;height:1px;background:#b8b8b8;"></div>
<div class="a" style="left:1395px;top:387px;width:509px;height:24px;overflow:hidden">
<span class="a t" style="left:26.30px;top:3.05px;font-size:12.5px;line-height:16.5px;color:#111;font-weight:bold;letter-spacing:0.415px;">Ngày lập</span>
<span class="a t" style="left:117.30px;top:3.05px;font-size:12.5px;line-height:16.5px;color:#111;font-weight:bold;letter-spacing:0.477px;">Mã phiếu</span>
<span class="a t" style="left:220.30px;top:3.05px;font-size:12.5px;line-height:16.5px;color:#111;font-weight:bold;letter-spacing:0.330px;">Khách hàng</span>
<span class="a t" style="left:375.30px;top:3.05px;font-size:12.5px;line-height:16.5px;color:#111;font-weight:bold;letter-spacing:0.408px;">Tổng tiền</span>
<span class="a t" style="left:450.30px;top:3.05px;font-size:12.5px;line-height:16.5px;color:#111;font-weight:bold;letter-spacing:0.434px;">Mã khách</span>
</div>
<div class="a " style="left:1395px;top:437px;width:509px;height:2px;background:#b0b0b0;"></div>
<svg style="left:1399.6px;top:420px" width="6" height="8" viewBox="0 0 6 8"><circle cx="2.8" cy="2.1" r="1.6" fill="#fff" stroke="#000" stroke-width="1.5"/><path d="M2.8 3.6V7.2" stroke="#000" stroke-width="1.5"/></svg>
<div class="a " style="left:1425px;top:421.5px;width:9px;height:1px;background:#8a8a8a;"></div>
<div class="a " style="left:1425px;top:424.5px;width:9px;height:1px;background:#8a8a8a;"></div>
<svg style="left:1512.5px;top:418px" width="16" height="10" viewBox="0 0 16 10"><text x="0" y="8" font-size="6.5" font-weight="bold" fill="#666" font-family="Liberation Mono">A</text><rect x="4.6" y="0.2" width="6.6" height="9.6" fill="#17a33a"/><text x="5.8" y="7.8" font-size="6.5" font-weight="bold" fill="#fff" font-family="Liberation Mono">B</text><text x="12" y="8" font-size="6.5" font-weight="bold" fill="#666" font-family="Liberation Mono">C</text></svg>
<svg style="left:1615.5px;top:418px" width="16" height="10" viewBox="0 0 16 10"><text x="0" y="8" font-size="6.5" font-weight="bold" fill="#666" font-family="Liberation Mono">A</text><rect x="4.6" y="0.2" width="6.6" height="9.6" fill="#17a33a"/><text x="5.8" y="7.8" font-size="6.5" font-weight="bold" fill="#fff" font-family="Liberation Mono">B</text><text x="12" y="8" font-size="6.5" font-weight="bold" fill="#666" font-family="Liberation Mono">C</text></svg>
<div class="a " style="left:1773.5px;top:421.5px;width:9px;height:1px;background:#8a8a8a;"></div>
<div class="a " style="left:1773.5px;top:424.5px;width:9px;height:1px;background:#8a8a8a;"></div>
<svg style="left:1845.5px;top:418px" width="16" height="10" viewBox="0 0 16 10"><text x="0" y="8" font-size="6.5" font-weight="bold" fill="#666" font-family="Liberation Mono">A</text><rect x="4.6" y="0.2" width="6.6" height="9.6" fill="#17a33a"/><text x="5.8" y="7.8" font-size="6.5" font-weight="bold" fill="#fff" font-family="Liberation Mono">B</text><text x="12" y="8" font-size="6.5" font-weight="bold" fill="#666" font-family="Liberation Mono">C</text></svg>
<div class="a h" style="left:1395px;top:439px;width:21px;height:168px;"></div>
<div class="a " style="left:1417px;top:439px;width:487px;height:27px;background:#f3f3f3;"></div>
<div class="a " style="left:1611px;top:439px;width:154px;height:27px;background:linear-gradient(90deg,#ffff00 0,#ffff30 35%,#ffffa6 100%);"></div>
<div class="a " style="left:1395px;top:466px;width:509px;height:1px;background:#d0d0d0;"></div>
<span class="a t" style="left:1421.50px;top:443.10px;font-size:14px;line-height:18px;color:#111;letter-spacing:0.325px;">22/08/2023</span>
<span class="a t" style="left:1512.50px;top:443.10px;font-size:14px;line-height:18px;color:#111;letter-spacing:-0.237px;">PBH00006-2...</span>
<span class="a t" style="left:1616.50px;top:438.60px;font-size:15px;line-height:19px;color:#ff0000;font-weight:bold;letter-spacing:-0.691px;">Chị Hiền</span>
<span class="a t" style="left:1793.50px;top:443.10px;font-size:14px;line-height:18px;color:#111;letter-spacing:0.035px;">50,000</span>
<div class="a " style="left:1395px;top:494px;width:509px;height:1px;background:#d0d0d0;"></div>
<span class="a t" style="left:1421.50px;top:471.10px;font-size:14px;line-height:18px;color:#111;letter-spacing:0.325px;">22/08/2023</span>
<span class="a t" style="left:1512.50px;top:471.10px;font-size:14px;line-height:18px;color:#111;letter-spacing:-0.237px;">PBH00005-2...</span>
<span class="a t" style="left:1616.50px;top:467.70px;font-size:14px;line-height:18px;color:#111;letter-spacing:-0.742px;">Chị Hiền</span>
<span class="a t" style="left:1793.50px;top:471.10px;font-size:14px;line-height:18px;color:#111;letter-spacing:0.035px;">60,000</span>
<div class="a " style="left:1395px;top:522px;width:509px;height:1px;background:#d0d0d0;"></div>
<span class="a t" style="left:1421.50px;top:499.10px;font-size:14px;line-height:18px;color:#111;letter-spacing:0.325px;">17/07/2023</span>
<span class="a t" style="left:1512.50px;top:499.10px;font-size:14px;line-height:18px;color:#111;letter-spacing:-0.237px;">PBH00004-1...</span>
<span class="a t" style="left:1616.50px;top:495.70px;font-size:14px;line-height:18px;color:#111;letter-spacing:-0.210px;">Nguyễn Hoàng Thiện</span>
<span class="a t" style="left:1773.00px;top:499.10px;font-size:14px;line-height:18px;color:#111;letter-spacing:0.151px;">6,600,000</span>
<div class="a " style="left:1417px;top:523px;width:487px;height:27px;background:linear-gradient(90deg,#87ceeb 0,#98cbe0 30%,#b2c2c8 75%,#c0c0c0 95%);"></div>
<div class="a " style="left:1395px;top:550px;width:509px;height:1px;background:#d0d0d0;"></div>
<span class="a t" style="left:1421.50px;top:527.10px;font-size:14px;line-height:18px;color:#111;letter-spacing:0.325px;">17/07/2023</span>
<span class="a t" style="left:1512.50px;top:527.10px;font-size:14px;line-height:18px;color:#111;letter-spacing:-0.237px;">PBH00003-1...</span>
<span class="a t" style="left:1616.50px;top:523.70px;font-size:14px;line-height:18px;color:#111;letter-spacing:-0.210px;">Nguyễn Hoàng Thiện</span>
<span class="a t" style="left:1773.00px;top:527.10px;font-size:14px;line-height:18px;color:#111;letter-spacing:0.151px;">3,990,000</span>
<div class="a " style="left:1395px;top:578px;width:509px;height:1px;background:#d0d0d0;"></div>
<span class="a t" style="left:1421.50px;top:555.10px;font-size:14px;line-height:18px;color:#111;letter-spacing:0.325px;">04/07/2023</span>
<span class="a t" style="left:1512.50px;top:555.10px;font-size:14px;line-height:18px;color:#111;letter-spacing:-0.237px;">PBH00002-0...</span>
<span class="a t" style="left:1616.50px;top:551.70px;font-size:14px;line-height:18px;color:#111;letter-spacing:-0.742px;">Chị Hiền</span>
<span class="a t" style="left:1785.00px;top:555.10px;font-size:14px;line-height:18px;color:#111;letter-spacing:0.148px;">650,000</span>
<div class="a " style="left:1395px;top:606px;width:509px;height:1px;background:#d0d0d0;"></div>
<span class="a t" style="left:1421.50px;top:583.10px;font-size:14px;line-height:18px;color:#111;letter-spacing:0.325px;">04/07/2023</span>
<span class="a t" style="left:1512.50px;top:583.10px;font-size:14px;line-height:18px;color:#111;letter-spacing:-0.237px;">PBH00001-0...</span>
<span class="a t" style="left:1616.50px;top:579.70px;font-size:14px;line-height:18px;color:#111;letter-spacing:-0.323px;">Cô Loan</span>
<span class="a t" style="left:1773.00px;top:583.10px;font-size:14px;line-height:18px;color:#111;letter-spacing:0.151px;">2,800,000</span>
<div class="a " style="left:1416px;top:387px;width:1px;height:220px;background:#c4c4c4;"></div>
<div class="a " style="left:1507px;top:387px;width:1px;height:220px;background:#c4c4c4;"></div>
<div class="a " style="left:1610px;top:387px;width:1px;height:220px;background:#c4c4c4;"></div>
<div class="a " style="left:1765px;top:387px;width:1px;height:220px;background:#c4c4c4;"></div>
<div class="a " style="left:1840px;top:387px;width:1px;height:220px;background:#c4c4c4;"></div>
<svg style="left:1401.4px;top:448.6px" width="5" height="8" viewBox="0 0 5 8"><path d="M0 0L4.2 3.7L0 7.4Z" fill="#000"/></svg>
<div class="a " style="left:1395px;top:889px;width:509px;height:1px;background:#b4b4b4;"></div>
<div class="a h" style="left:1395px;top:890px;width:509px;height:34px;"></div>
<div class="a " style="left:1509px;top:892px;width:101px;height:28px;background:#fff;border:1px dashed #d8d8d8;"></div>
<span class="a t" style="left:1531.50px;top:898.00px;font-size:15px;line-height:19px;color:#ff0000;font-weight:bold;letter-spacing:-0.408px;">Có 6 phiếu</span>
<div class="a " style="left:1767px;top:892px;width:73px;height:28px;background:#fff;border:1px dashed #d8d8d8;"></div>
<span class="a t" style="left:1774.50px;top:896.80px;font-size:15px;line-height:19px;color:#ff0000;font-weight:bold;letter-spacing:0.202px;">14,150...</span>
<div class="a " style="left:1395px;top:923px;width:509px;height:1px;background:repeating-linear-gradient(90deg,#d0d0d0 0,#d0d0d0 3px,transparent 3px,transparent 6px);"></div>
<div class="a " style="left:1395px;top:924px;width:509px;height:16px;background:#fff;"></div>
<div class="a h" style="left:1412px;top:923px;width:290px;height:16px;border:1px solid #a8a8a8;"></div>
<svg style="left:1401px;top:928px" width="5" height="8" viewBox="0 0 5 8"><path d="M4.1 0L0 3.5L4.1 7Z" fill="#000"/></svg>
<svg style="left:1893.6px;top:928px" width="5" height="8" viewBox="0 0 5 8"><path d="M0 0L4.1 3.5L0 7Z" fill="#000"/></svg>
<div class="a " style="left:1528px;top:645px;width:217px;height:73px;background:#fff;border:2.4px solid #000;border-radius:5px;box-shadow:2px 3px 4px rgba(0,0,0,0.5);"></div>
<span class="a t" style="left:1538.00px;top:671.50px;font-size:16px;line-height:20px;color:#222;letter-spacing:-0.364px;">1.Danh sách phiếu bán hàng</span>
<svg style="left:1430px;top:610px" width="110" height="44" viewBox="0 0 110 44"><defs><filter id="sh" x="-10%" y="-30%" width="120%" height="170%"><feGaussianBlur in="SourceAlpha" stdDeviation="1.2"/><feOffset dx="1" dy="2.5"/><feComponentTransfer><feFuncA type="linear" slope="0.55"/></feComponentTransfer><feMerge><feMergeNode/><feMergeNode in="SourceGraphic"/></feMerge></filter></defs><g filter="url(#sh)"><path d="M99 36L8.4 6.4" stroke="#000" stroke-width="2"/><path d="M6.2 5.6L12.4 4.2L10.6 9.4Z" fill="#000"/></g></svg>
<svg style="left:997px;top:597px" width="14" height="21" viewBox="0 0 14 21"><path d="M1.4 1.1V17.8L5.4 14L7.6 19.2Q8.8 20.2 10.2 18.6L8.4 13.6L12.8 13.2L12.8 12.4Z" fill="#fff" stroke="#14141e" stroke-width="1.05" stroke-linejoin="round"/></svg>
<div class="a h" style="left:2px;top:953px;width:775px;height:50px;"></div>
<div class="a " style="left:2px;top:1003px;width:775px;height:1px;background:#b8b8b8;"></div>
<div class="a " style="left:2px;top:952px;width:775px;height:1px;background:#c4c4c4;"></div>
<div class="a " style="left:118px;top:960px;width:1px;height:37px;background:repeating-linear-gradient(180deg,#c8c8c8 0,#c8c8c8 3px,transparent 3px,transparent 6px);"></div>
<span class="a t" style="left:47.50px;top:968.65px;font-size:14.5px;line-height:18.5px;color:#0000ff;font-weight:bold;letter-spacing:-0.138px;">LƯU (F2)</span>
<span class="a t" style="left:147.00px;top:968.65px;font-size:14.5px;line-height:18.5px;color:#0000ff;font-weight:bold;letter-spacing:0.023px;">LƯU IN</span>
<span class="a t" style="left:247.00px;top:968.65px;font-size:14.5px;line-height:18.5px;color:#0000ff;font-weight:bold;letter-spacing:0.652px;">IN A4 (F6)</span>
<span class="a t" style="left:368.50px;top:968.65px;font-size:14.5px;line-height:18.5px;color:#0000ff;font-weight:bold;letter-spacing:0.366px;">IN A4KCN</span>
<span class="a t" style="left:471.00px;top:968.65px;font-size:14.5px;line-height:18.5px;color:#000;font-weight:bold;letter-spacing:0.410px;">XEM IN</span>
<span class="a t" style="left:572.50px;top:968.65px;font-size:14.5px;line-height:18.5px;color:#ff0000;font-weight:bold;letter-spacing:-0.359px;">THOÁT</span>
<span class="a t" style="left:670.00px;top:968.65px;font-size:14.5px;line-height:18.5px;color:#0000ff;font-weight:bold;letter-spacing:0.275px;">IN XUẤT KHO</span>
<svg style="left:13px;top:962px" width="31" height="30" viewBox="0 0 31 30"><defs><linearGradient id="fl" x1="0" y1="0" x2="1" y2="1"><stop offset="0" stop-color="#66718f"/><stop offset="1" stop-color="#38425e"/></linearGradient><linearGradient id="ga" x1="0" y1="0" x2="0" y2="1"><stop offset="0" stop-color="#b4dc50"/><stop offset="1" stop-color="#5c9e1e"/></linearGradient></defs><rect x="1" y="5.2" width="24" height="23.8" rx="1.6" fill="url(#fl)"/><rect x="6" y="5.6" width="12.6" height="9" fill="#d4deee"/><rect x="3.6" y="6.4" width="2" height="21.6" fill="#7a86a6" opacity="0.6"/><rect x="6" y="20" width="15" height="9" fill="#f2f5fa"/><rect x="6" y="26" width="15" height="2" fill="#5a9fd8"/><path d="M14.4 4.2H20.4V0.4L29.6 8.2L20.4 16V12H14.4Z" fill="url(#ga)" stroke="#6aa024" stroke-width="0.8"/></svg>
<svg style="left:210.5px;top:962px" width="31" height="30" viewBox="0 0 31 30"><defs><linearGradient id="pb" x1="0" y1="0" x2="0" y2="1"><stop offset="0" stop-color="#f2f5fc"/><stop offset="0.55" stop-color="#d2daee"/><stop offset="1" stop-color="#aab6d6"/></linearGradient><radialGradient id="qg" cx="0.4" cy="0.3" r="0.8"><stop offset="0" stop-color="#b8dc48"/><stop offset="1" stop-color="#5a8c14"/></radialGradient></defs><rect x="6.8" y="3.5" width="13.8" height="10.5" fill="#e8eaf6" stroke="#9aa4c2" stroke-width="0.8"/><rect x="0.6" y="12.2" width="27" height="15.6" rx="2.6" fill="url(#pb)" stroke="#93a0c4" stroke-width="0.8"/><path d="M4.8 12.6H22.8V16.4Q22.8 19 20 19H7.6Q4.8 19 4.8 16.4Z" fill="#566082"/><path d="M5.6 12.8H22V14.6H5.6Z" fill="#7c86a6"/><rect x="6.8" y="23" width="14.6" height="6.4" fill="#fff" stroke="#93a0c4" stroke-width="0.8"/><rect x="8.6" y="24.6" width="11" height="3.4" fill="#5eaae2"/><circle cx="23.1" cy="8.3" r="7.3" fill="url(#qg)" stroke="#6a9a1c" stroke-width="0.6"/><text x="23.1" y="12.2" font-size="11" font-weight="bold" fill="#3a5a0c" text-anchor="middle" font-family="Liberation Sans">?</text></svg>
<svg style="left:332.5px;top:962px" width="31" height="30" viewBox="0 0 31 30"><defs><linearGradient id="pb" x1="0" y1="0" x2="0" y2="1"><stop offset="0" stop-color="#f2f5fc"/><stop offset="0.55" stop-color="#d2daee"/><stop offset="1" stop-color="#aab6d6"/></linearGradient><radialGradient id="qg" cx="0.4" cy="0.3" r="0.8"><stop offset="0" stop-color="#b8dc48"/><stop offset="1" stop-color="#5a8c14"/></radialGradient></defs><rect x="6.8" y="3.5" width="13.8" height="10.5" fill="#e8eaf6" stroke="#9aa4c2" stroke-width="0.8"/><rect x="0.6" y="12.2" width="27" height="15.6" rx="2.6" fill="url(#pb)" stroke="#93a0c4" stroke-width="0.8"/><path d="M4.8 12.6H22.8V16.4Q22.8 19 20 19H7.6Q4.8 19 4.8 16.4Z" fill="#566082"/><path d="M5.6 12.8H22V14.6H5.6Z" fill="#7c86a6"/><rect x="6.8" y="23" width="14.6" height="6.4" fill="#fff" stroke="#93a0c4" stroke-width="0.8"/><rect x="8.6" y="24.6" width="11" height="3.4" fill="#5eaae2"/><circle cx="23.1" cy="8.3" r="7.3" fill="url(#qg)" stroke="#6a9a1c" stroke-width="0.6"/><text x="23.1" y="12.2" font-size="11" font-weight="bold" fill="#3a5a0c" text-anchor="middle" font-family="Liberation Sans">?</text></svg>
<svg style="left:634.5px;top:962px" width="31" height="30" viewBox="0 0 31 30"><defs><linearGradient id="pb" x1="0" y1="0" x2="0" y2="1"><stop offset="0" stop-color="#f2f5fc"/><stop offset="0.55" stop-color="#d2daee"/><stop offset="1" stop-color="#aab6d6"/></linearGradient><radialGradient id="qg" cx="0.4" cy="0.3" r="0.8"><stop offset="0" stop-color="#b8dc48"/><stop offset="1" stop-color="#5a8c14"/></radialGradient></defs><rect x="6.8" y="3.5" width="13.8" height="10.5" fill="#e8eaf6" stroke="#9aa4c2" stroke-width="0.8"/><rect x="0.6" y="12.2" width="27" height="15.6" rx="2.6" fill="url(#pb)" stroke="#93a0c4" stroke-width="0.8"/><path d="M4.8 12.6H22.8V16.4Q22.8 19 20 19H7.6Q4.8 19 4.8 16.4Z" fill="#566082"/><path d="M5.6 12.8H22V14.6H5.6Z" fill="#7c86a6"/><rect x="6.8" y="23" width="14.6" height="6.4" fill="#fff" stroke="#93a0c4" stroke-width="0.8"/><rect x="8.6" y="24.6" width="11" height="3.4" fill="#5eaae2"/><circle cx="23.1" cy="8.3" r="7.3" fill="url(#qg)" stroke="#6a9a1c" stroke-width="0.6"/><text x="23.1" y="12.2" font-size="11" font-weight="bold" fill="#3a5a0c" text-anchor="middle" font-family="Liberation Sans">?</text></svg>
<div class="a " style="left:133px;top:971px;width:13px;height:13px;background:#fff;border:1px solid #8a8a8a;"></div>
<div class="a " style="left:457px;top:971px;width:13px;height:13px;background:#fff;border:1px solid #8a8a8a;"></div>
<svg style="left:457px;top:969px" width="15" height="15" viewBox="0 0 15 15"><path d="M1.2 8.4L2.4 7.4L5.4 11.2L12.2 1L13.2 1.6L5.6 13.6Z" fill="#000"/></svg>
<svg style="left:539px;top:965.5px" width="26" height="26" viewBox="0 0 26 26"><defs><linearGradient id="xg" x1="0" y1="0" x2="0" y2="1"><stop offset="0" stop-color="#ee8878"/><stop offset="0.45" stop-color="#d8493a"/><stop offset="1" stop-color="#b83226"/></linearGradient></defs><g transform="translate(13 12.5)" fill="url(#xg)" stroke="#b03a2e" stroke-width="0.7"><path d="M-11.1 -7.6L-7.6 -11.1Q-6.7 -12 -5.8 -11.1L0 -3.9L5.8 -11.1Q6.7 -12 7.6 -11.1L11.1 -7.6Q12 -6.7 11.1 -5.8L3.9 0L11.1 5.8Q12 6.7 11.1 7.6L7.6 11.1Q6.7 12 5.8 11.1L0 3.9L-5.8 11.1Q-6.7 12 -7.6 11.1L-11.1 7.6Q-12 6.7 -11.1 5.8L-3.9 0L-11.1 -5.8Q-12 -6.7 -11.1 -7.6Z"/></g></svg>
</body></html>
